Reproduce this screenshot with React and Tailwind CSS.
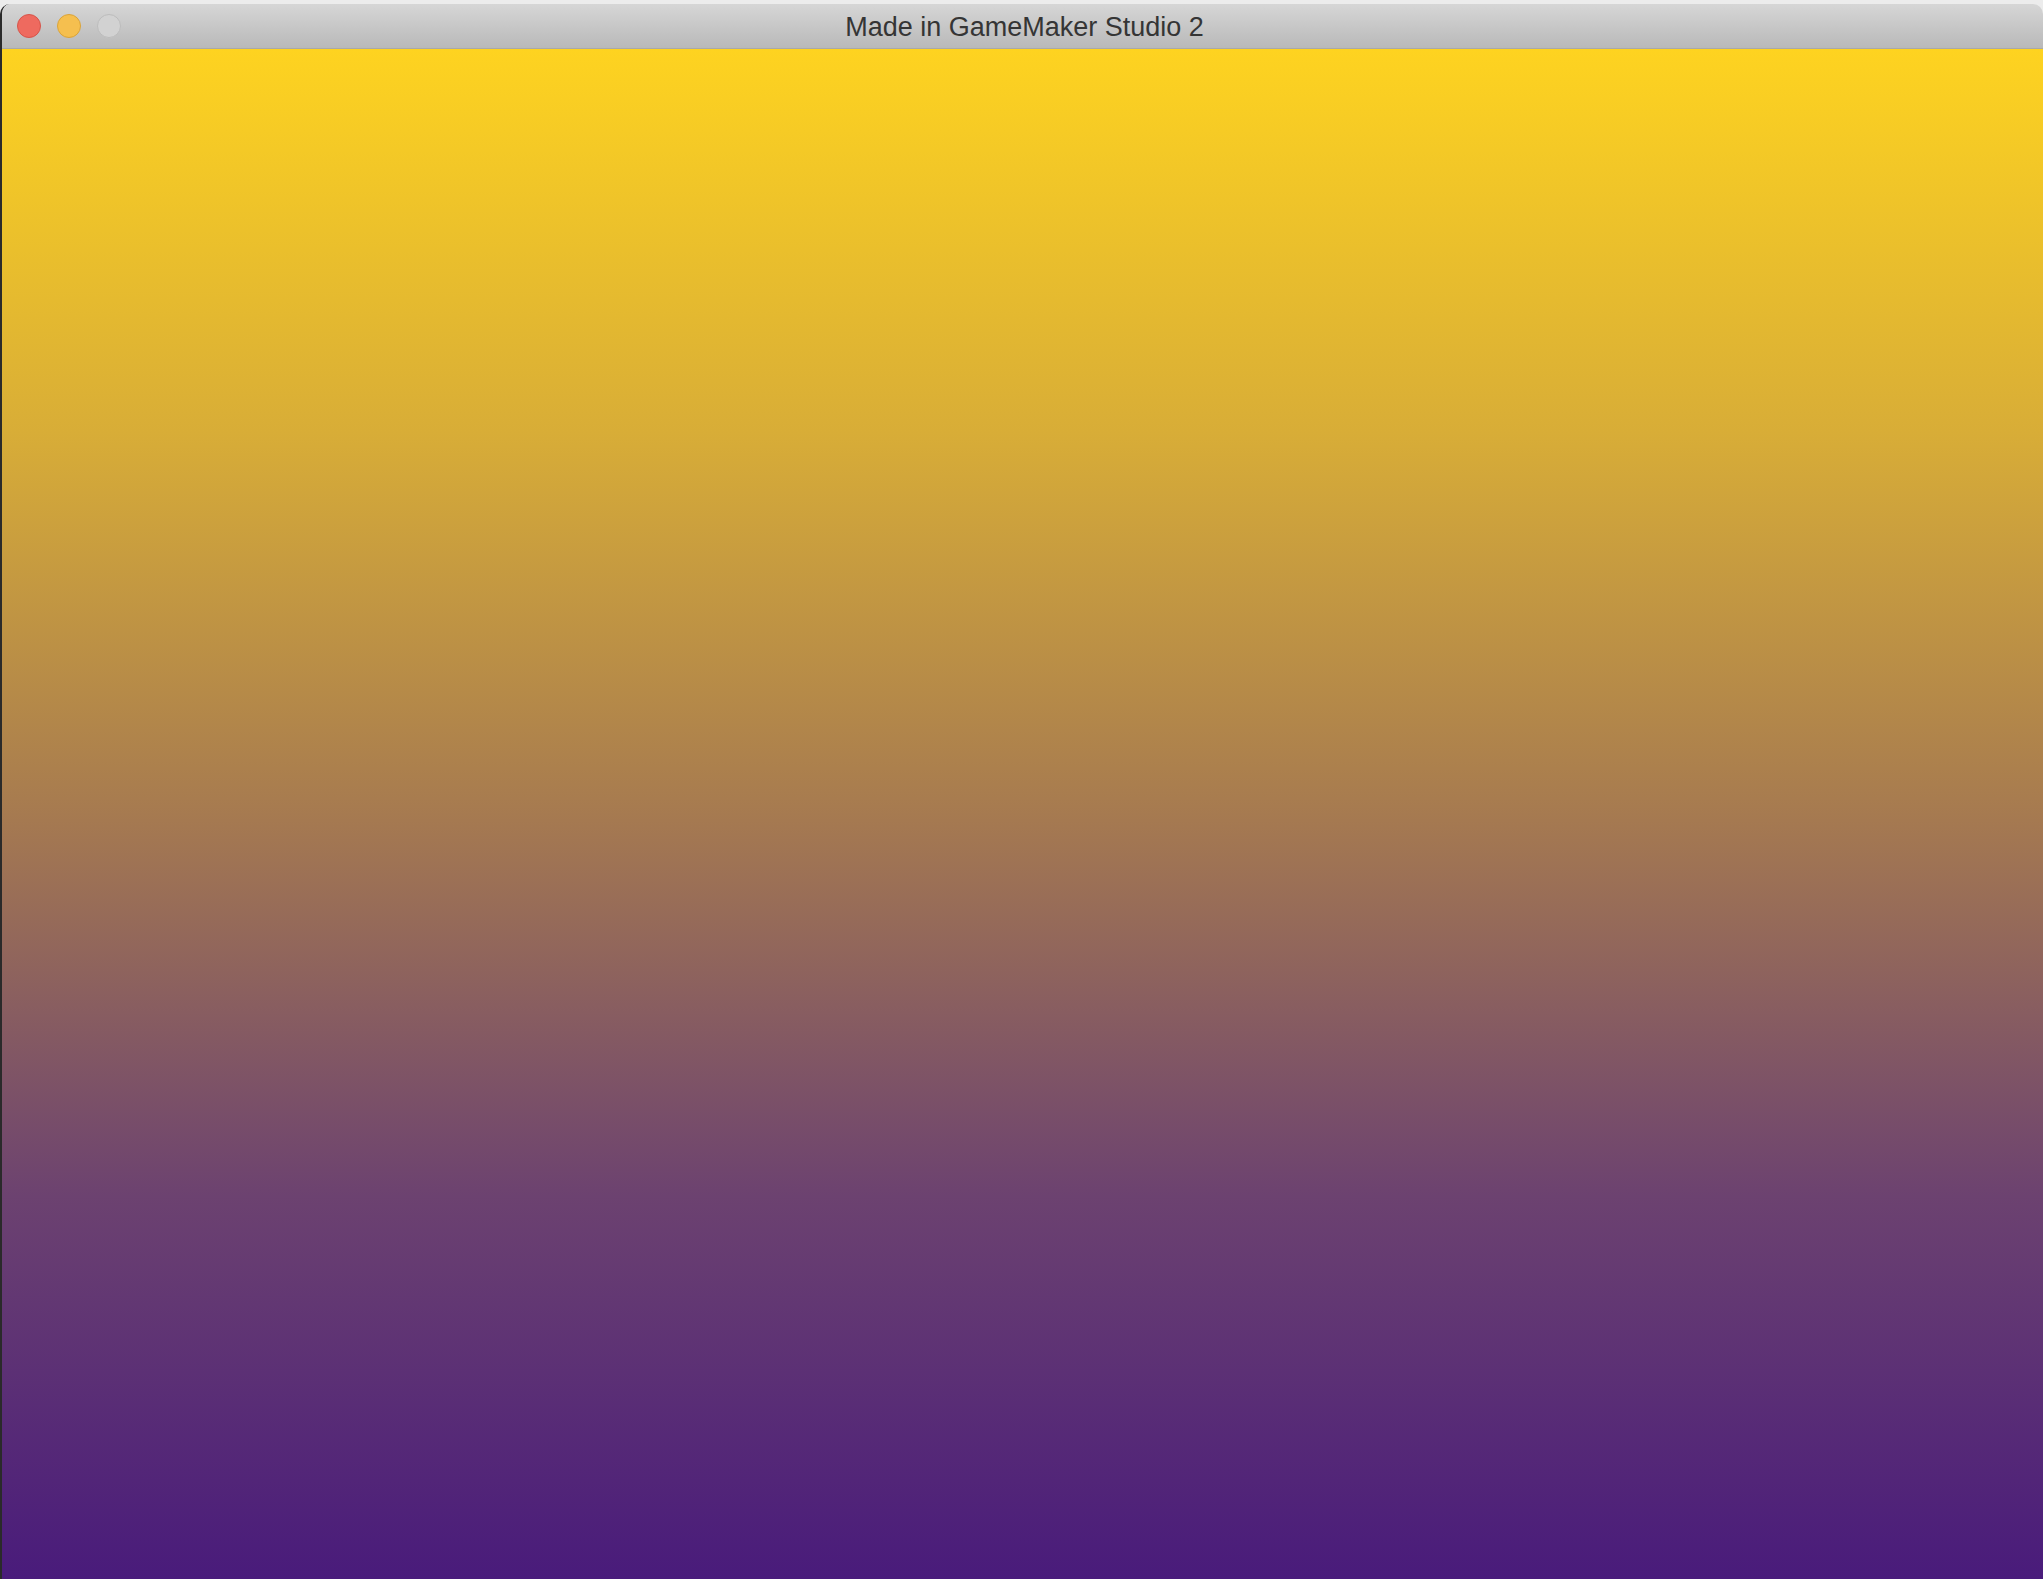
import React from "react";

function TrafficLight({ color, border }) {
  return <span className={`h-[24px] w-[24px] rounded-full border ${color} ${border}`} />;
}

export default function App() {
  return (
    <div className="h-[1579px] w-[2043px] overflow-hidden bg-[#ececec] pt-[4px]">
      <div className="flex h-[1575px] flex-col overflow-hidden rounded-t-[10px] border-l-2 border-[#2a2a2a]">
        <div className="relative flex h-[45px] shrink-0 items-center border-b border-[#a9a9a9] bg-gradient-to-b from-[#d6d6d6] to-[#b9b9b9] pl-[15px]">
          <div className="flex items-center gap-[16px]">
            <TrafficLight color="bg-[#ee6a5f]" border="border-[#d6544a]" />
            <TrafficLight color="bg-[#f5bf4f]" border="border-[#d9a33a]" />
            <TrafficLight color="bg-[#d2d2d2]" border="border-[#bcbcbc]" />
          </div>
          <div className="absolute inset-0 flex items-center justify-center pl-[4px] pt-[3px] font-['Liberation_Sans',Arial,sans-serif] text-[27px] text-[#353535]">
            Made in GameMaker Studio 2
          </div>
        </div>
        <div className="flex-1 bg-[linear-gradient(to_bottom,#fed320,#d8ad37_25%,#a67a50_50%,#6c4270_75%,#491b7b)]" />
      </div>
    </div>
  );
}
